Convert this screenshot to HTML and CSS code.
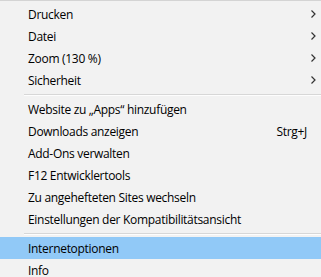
FILE: index.html
```html
<!DOCTYPE html>
<html lang="de">
<head>
  <meta charset="UTF-8">
  <title>Menü</title>
  <link rel="stylesheet" href="styles.css">
</head>
<body>

<div class="menu">
  <div class="item">Drucken <svg class="chev" width="5" height="8" viewBox="0 0 5 8"><polyline points="0.5,0.5 4,4 0.5,7.5" /></svg></div>
  <div class="item">Datei <svg class="chev" width="5" height="8" viewBox="0 0 5 8"><polyline points="0.5,0.5 4,4 0.5,7.5" /></svg></div>
  <div class="item">Zoom (130 %) <svg class="chev" width="5" height="8" viewBox="0 0 5 8"><polyline points="0.5,0.5 4,4 0.5,7.5" /></svg></div>
  <div class="item">Sicherheit <svg class="chev" width="5" height="8" viewBox="0 0 5 8"><polyline points="0.5,0.5 4,4 0.5,7.5" /></svg></div>
  <div class="sep"></div>
  <div class="item">Website zu „Apps“ hinzufügen</div>
  <div class="item">Downloads anzeigen <span class="key">Strg+J</span></div>
  <div class="item">Add-Ons verwalten</div>
  <div class="item">F12 Entwicklertools</div>
  <div class="item">Zu angehefteten Sites wechseln</div>
  <div class="item">Einstellungen der Kompatibilitätsansicht</div>
  <div class="sep"></div>
  <div class="item active">Internetoptionen</div>
  <div class="item">Info</div>
</div>

</body>
</html>
```

FILE: styles.css
```css
body { margin: 0; background: #f2f2f2; overflow: hidden; }
.menu {
  font-family: "Open Sans", sans-serif;
  font-size: 12px;
  letter-spacing: -0.3px;
  color: #000;
  background: #f2f2f2;
  border-top: 1px solid #d4d4d4;
  padding-top: 2px;
}
.item {
  height: 22px;
  padding-left: 28px;
  padding-right: 14px;
  display: flex;
  align-items: center;
  justify-content: space-between;
}
.item.active { background: #91c9f7; }
.sep {
  height: 1px;
  margin: 3px 0 2px 24px;
  background: #d7d7d7;
  border-bottom: 1px solid #fdfdfd;
}
.chev {
  margin-right: -9px;
  fill: none;
  stroke: #333;
  stroke-width: 1.2;
}
```
